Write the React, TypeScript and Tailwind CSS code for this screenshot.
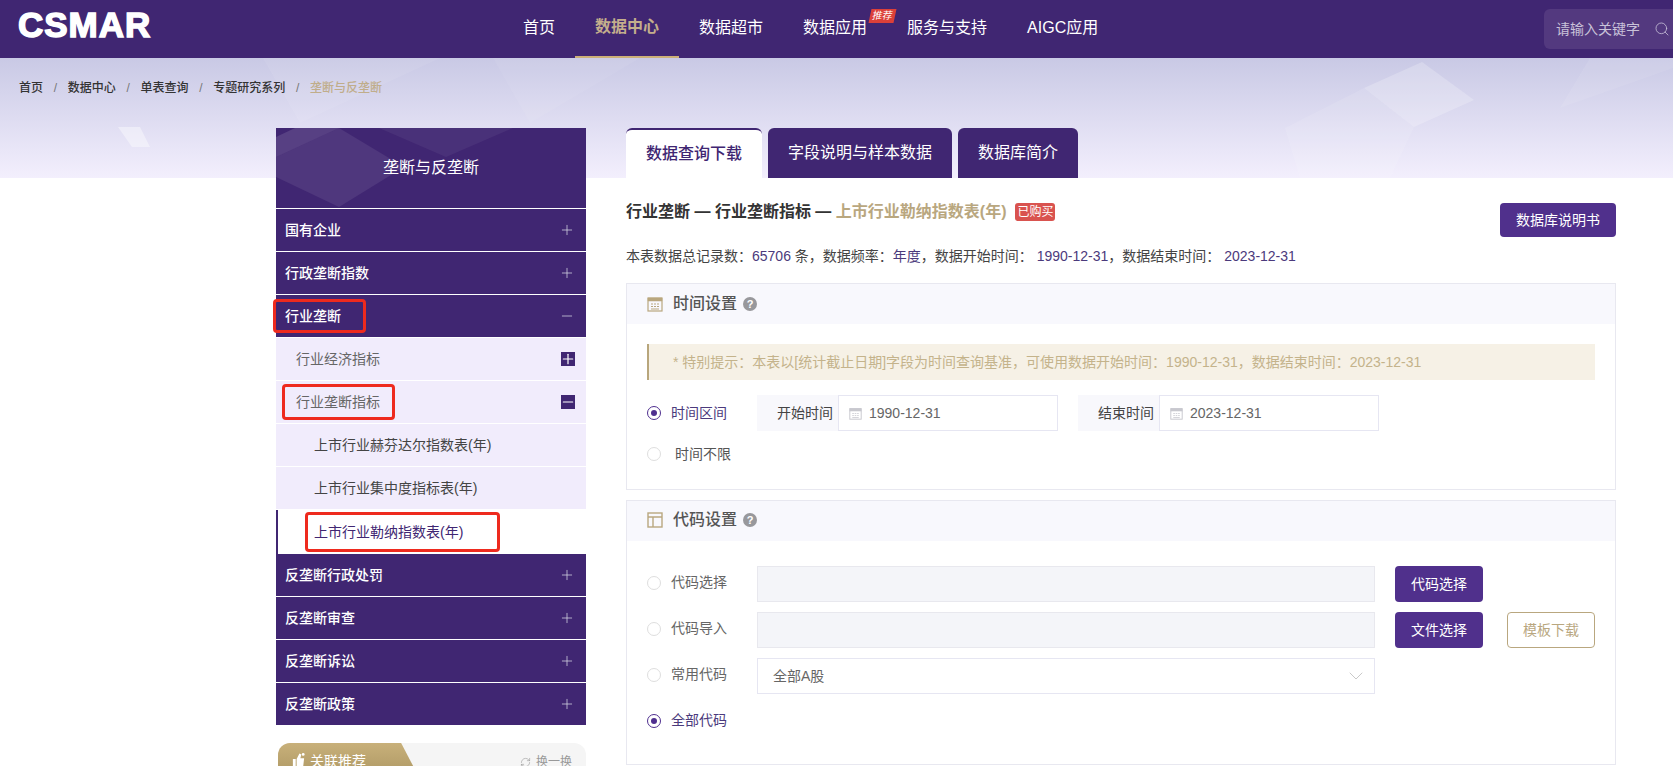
import { Search, ChevronDown, Plus, Minus, RefreshCw } from 'lucide-react'

const navItems = ['首页', '数据中心', '数据超市', '数据应用', '服务与支持', 'AIGC应用']
const crumbs = ['首页', '数据中心', '单表查询', '专题研究系列']

function RedBox({ className }: { className: string }) {
  return <span className={`absolute border-[3px] border-[#ee2a1e] rounded-[4px] pointer-events-none ${className}`} />
}

function MenuRow({ label, open, children }: { label: string; open?: boolean; children?: React.ReactNode }) {
  return (
    <div className="relative h-[42px] mb-px bg-[#402672] flex items-center justify-between pl-[9px] pr-[11px] text-white text-sm font-medium">
      <span>{label}</span>
      {open ? <Minus size={16} strokeWidth={1.1} className="text-[#dcdbe8]" /> : <Plus size={16} strokeWidth={1.1} className="text-[#dcdbe8]" />}
      {children}
    </div>
  )
}

function SubRow({ label, open, children }: { label: string; open?: boolean; children?: React.ReactNode }) {
  return (
    <div className="relative h-[42px] mb-px bg-[#f1ecfc] flex items-center justify-between pl-5 pr-[11px] text-sm text-[#666]">
      <span>{label}</span>
      <span className="w-[14px] h-[14px] bg-[#402672] text-white flex items-center justify-center overflow-hidden">
        {open ? <Minus size={16} strokeWidth={1.8} className="shrink-0" /> : <Plus size={16} strokeWidth={1.8} className="shrink-0" />}
      </span>
      {children}
    </div>
  )
}

function Radio({ on, className = '' }: { on?: boolean; className?: string }) {
  return (
    <span className={`w-[14px] h-[14px] rounded-full border flex items-center justify-center shrink-0 ${on ? 'border-[#4f2f8f]' : 'border-[#dedede]'} ${className}`}>
      {on && <span className="w-[6px] h-[6px] rounded-full bg-[#4f2f8f]" />}
    </span>
  )
}

function Help() {
  return (
    <span className="w-[14px] h-[14px] rounded-full bg-[#98989c] text-white text-[11px] font-bold flex items-center justify-center">?</span>
  )
}

function CalendarIcon({ className }: { className: string }) {
  return (
    <svg viewBox="0 0 16 16" className={className} fill="none" stroke="currentColor">
      <rect x="1" y="2" width="14" height="13" strokeWidth="1.2" />
      <path d="M1 2h14v3H1z" fill="currentColor" strokeWidth="0.5" />
      <path d="M4 8h2M7 8h2M10 8h2M4 10.5h2M7 10.5h2M10 10.5h2M4 13h8" strokeWidth="1" />
    </svg>
  )
}

function DateField({ label, value }: { label: string; value: string }) {
  return (
    <div className="flex h-9">
      <span className="w-[81px] bg-[#f8f8fc] text-sm text-[#444] flex items-center justify-end pr-[5px]">{label}</span>
      <div className="w-[220px] border border-[#e6e6f2] flex items-center pl-[10px] text-sm text-[#666]">
        <CalendarIcon className="w-[13px] h-[13px] text-[#c9c9cf] mr-[7px]" />
        {value}
      </div>
    </div>
  )
}

export default function App() {
  return (
    <div className="relative h-[766px] overflow-hidden bg-white font-['Liberation_Sans','Noto_Sans_CJK_SC',sans-serif] text-[#333]">
      {/* banner backdrop */}
      <div className="absolute left-0 right-0 top-[58px] h-[120px] bg-gradient-to-b from-[#c9c9e5] to-[#f3effd] overflow-hidden">
        <svg className="absolute inset-0 w-full h-full" viewBox="0 0 1673 120" preserveAspectRatio="none">
          <polygon points="263,0 440,0 300,65" fill="#fff" opacity="0.07" />
          <polygon points="493,0 640,0 530,65" fill="#fff" opacity="0.06" />
          <polygon points="118,69 140,69 150,89 132,89" fill="#fff" opacity="0.4" />
          <polygon points="1364,30 1422,4 1474,42 1414,69" fill="#fff" opacity="0.22" />
          <polygon points="1285,70 1364,30 1414,69 1390,120 1300,120" fill="#fff" opacity="0.1" />
          <polygon points="1560,50 1673,10 1673,0 1590,0" fill="#fff" opacity="0.08" />
        </svg>
      </div>

      <header className="relative h-[58px] bg-[#402672] flex items-start">
        <span className="absolute left-[18px] top-[4px] text-[35px] leading-[42px] font-bold tracking-[1px] text-white [-webkit-text-stroke:1.5px_white]">CSMAR</span>
        <nav className="flex ml-[503px]">
          {navItems.map((item) => (
            <div
              key={item}
              className={`relative h-[58px] px-5 pb-[2px] flex items-center text-base ${item === '数据中心' ? 'text-[#c4ae8c] font-bold border-b-2 border-[#cdb078]' : 'text-white'}`}
            >
              {item}
              {item === '数据应用' && (
                <span className="absolute left-[87px] top-[9px] w-[25px] h-[14px] bg-[#dc4039] text-white text-[10px] leading-[14px] text-center -skew-x-12">推荐</span>
              )}
            </div>
          ))}
        </nav>
        <div className="absolute left-[1544px] right-0 top-[9px] h-[40px] bg-[#53397f] rounded-l-md flex items-center pl-[12px] text-sm text-[#c9c2d9]">
          <span className="w-[84px] shrink-0">请输入关键字</span>
          <Search size={16} strokeWidth={1.2} className="ml-[14px] shrink-0" />
        </div>
      </header>

      <div className="relative h-[70px] flex items-start pl-[19px] pt-[22px] text-xs font-medium">
        {crumbs.map((c) => (
          <span key={c} className="flex">
            <span className="text-[#333]">{c}</span>
            <span className="w-[24.75px] text-center text-[#777] font-normal">/</span>
          </span>
        ))}
        <span className="text-[#c0ad8a]">垄断与反垄断</span>
      </div>

      <div className="relative flex pl-[276px]">
        {/* left menu */}
        <aside className="w-[310px] shrink-0">
          <div className="relative h-20 mb-px bg-[#402672] overflow-hidden flex items-center justify-center text-white text-base">
            <svg className="absolute inset-0 w-full h-full" viewBox="0 0 310 80">
              <polygon points="0,9 19,0 63,0 0,29" fill="#fff" opacity="0.12" />
              <polygon points="0,29 63,0 128,39 63,79 0,49" fill="#fff" opacity="0.08" />
              <polygon points="103,0 237,0 170,29" fill="#fff" opacity="0.05" />
            </svg>
            <span className="relative">垄断与反垄断</span>
          </div>
          <MenuRow label="国有企业" />
          <MenuRow label="行政垄断指数" />
          <MenuRow label="行业垄断" open>
            <RedBox className="left-[-3px] top-[4px] w-[93px] h-[34px]" />
          </MenuRow>
          <SubRow label="行业经济指标" />
          <SubRow label="行业垄断指标" open>
            <RedBox className="left-[6px] top-[3px] w-[113px] h-[36px]" />
          </SubRow>
          <div className="h-[42px] mb-px bg-[#f1ecfc] flex items-center pl-[38px] text-sm text-[#444]">上市行业赫芬达尔指数表(年)</div>
          <div className="h-[42px] mb-px bg-[#f1ecfc] flex items-center pl-[38px] text-sm text-[#444]">上市行业集中度指标表(年)</div>
          <div className="relative h-[44px] bg-white border-l-2 border-[#402672] flex items-center pl-9 text-sm text-[#402672]">
            上市行业勒纳指数表(年)
            <RedBox className="left-[27px] top-[2px] w-[195px] h-[40px]" />
          </div>
          <MenuRow label="反垄断行政处罚" />
          <MenuRow label="反垄断审查" />
          <MenuRow label="反垄断诉讼" />
          <MenuRow label="反垄断政策" />
          <div className="mt-[18px] ml-[2px] h-10 bg-[#f5f5f5] rounded-t-xl flex items-start justify-between pr-[14px]">
            <div className="w-[144px] h-10 bg-gradient-to-b from-[#c8b07a] to-[#a8935f] rounded-tl-xl [clip-path:polygon(0_0,85.5%_0,100%_100%,0_100%)] flex items-start pl-[13px] pt-[8px] text-white text-sm">
              <svg viewBox="0 0 16 16" className="w-[15px] h-[16px] mr-[4px] mt-[1px]" fill="#fff">
                <path d="M2 7h3v8H2zM6 7l3-6 2 1-1 4h4l-1 9H6z" />
                <circle cx="13" cy="2" r="1.5" />
              </svg>
              关联推荐
            </div>
            <span className="flex items-center pt-[11px] text-xs text-[#999]">
              <RefreshCw size={11} strokeWidth={1.3} className="mr-[5px]" />
              换一换
            </span>
          </div>
        </aside>

        {/* right content */}
        <main className="w-[990px] ml-[40px] shrink-0">
          <div className="flex gap-[6px] h-[50px]">
            <div className="w-[136px] bg-white border-t-2 border-[#402672] rounded-t-md flex items-center justify-center text-base font-medium text-[#402672]">数据查询下载</div>
            <div className="w-[184px] bg-[#402672] rounded-t-md flex items-center justify-center text-base text-white">字段说明与样本数据</div>
            <div className="w-[120px] bg-[#402672] rounded-t-md flex items-center justify-center text-base text-white">数据库简介</div>
          </div>

          <div className="flex justify-between pt-[25px] h-[59px]">
            <div className="flex items-center h-[18px] text-base font-bold text-[#333]">
              行业垄断 — 行业垄断指标 —&nbsp;
              <span className="text-[#b9a77f]">上市行业勒纳指数表(年)</span>
              <span className="ml-[9px] w-10 h-[18px] rounded-[3px] bg-[#d9534f] text-white text-xs font-normal flex items-center justify-center">已购买</span>
            </div>
            <button className="w-[116px] h-[34px] bg-[#50308c] rounded text-white text-sm">数据库说明书</button>
          </div>

          <p className="h-[46px] pt-[9px] text-sm text-[#444]">
            本表数据总记录数：<span className="text-[#4b3a7c]">65706</span> 条，数据频率：<span className="text-[#4b3a7c]">年度</span>，数据开始时间： <span className="text-[#4b3a7c]">1990-12-31</span>，数据结束时间： <span className="text-[#4b3a7c]">2023-12-31</span>
          </p>

          <section className="h-[207px] border border-[#e8e8f0] mb-[10px]">
            <div className="h-10 bg-[#f8f8fd] flex items-center pl-5 text-base font-medium text-[#555]">
              <CalendarIcon className="w-4 h-4 text-[#b9a77f] mr-[10px]" />
              时间设置
              <span className="ml-[6px]"><Help /></span>
            </div>
            <div className="mt-5 mx-5 h-9 bg-[#f6f1e6] border-l-2 border-[#b8a67c] flex items-center pl-[24px] text-sm text-[#c4b38b]">
              * 特别提示：本表以[统计截止日期]字段为时间查询基准，可使用数据开始时间：1990-12-31，数据结束时间：2023-12-31
            </div>
            <div className="flex items-center mt-[15px] pl-5">
              <Radio on />
              <span className="ml-[10px] w-[86px] text-sm text-[#4b3a7c]">时间区间</span>
              <div className="flex gap-5">
                <DateField label="开始时间" value="1990-12-31" />
                <DateField label="结束时间" value="2023-12-31" />
              </div>
            </div>
            <div className="flex items-center mt-[13px] pl-5">
              <Radio />
              <span className="ml-[14px] text-sm text-[#555]">时间不限</span>
            </div>
          </section>

          <section className="h-[265px] border border-[#e8e8f0]">
            <div className="h-10 pb-[2px] bg-[#f8f8fd] flex items-center pl-5 text-base font-medium text-[#555]">
              <svg viewBox="0 0 16 16" className="w-4 h-4 text-[#b9a77f] mr-[10px]" fill="none" stroke="currentColor" strokeWidth="1.4">
                <rect x="1" y="1" width="14" height="14" />
                <path d="M1 5h14M6 5v10" />
              </svg>
              代码设置
              <span className="ml-[6px]"><Help /></span>
            </div>
            <div className="pt-[25px] pl-5 flex flex-col gap-[10px]">
              <div className="flex h-9 items-center">
                <Radio className="mb-[2px]" />
                <span className="ml-[10px] mb-1 w-[86px] text-sm text-[#666]">代码选择</span>
                <div className="w-[618px] h-9 bg-[#f4f5f9] border border-[#e8e8ee]" />
                <button className="ml-5 w-[88px] h-9 bg-[#50308c] rounded text-white text-sm">代码选择</button>
              </div>
              <div className="flex h-9 items-center">
                <Radio className="mb-[2px]" />
                <span className="ml-[10px] mb-1 w-[86px] text-sm text-[#666]">代码导入</span>
                <div className="w-[618px] h-9 bg-[#f4f5f9] border border-[#e8e8ee]" />
                <button className="ml-5 w-[88px] h-9 bg-[#50308c] rounded text-white text-sm">文件选择</button>
                <button className="ml-6 w-[88px] h-9 bg-white border border-[#b9a77f] rounded text-[#b9a77f] text-sm">模板下载</button>
              </div>
              <div className="flex h-9 items-center">
                <Radio className="mb-[2px]" />
                <span className="ml-[10px] mb-1 w-[86px] text-sm text-[#666]">常用代码</span>
                <div className="w-[618px] h-9 bg-white border border-[#e6e6f2] flex items-center justify-between pl-[15px] pr-[6px] text-sm text-[#666]">
                  全部A股
                  <ChevronDown size={24} strokeWidth={0.8} className="text-[#bbb]" />
                </div>
              </div>
              <div className="flex h-9 items-center">
                <Radio on className="mb-[2px]" />
                <span className="ml-[10px] mb-1 text-sm text-[#4b3a7c]">全部代码</span>
              </div>
            </div>
          </section>
        </main>
      </div>
    </div>
  )
}
